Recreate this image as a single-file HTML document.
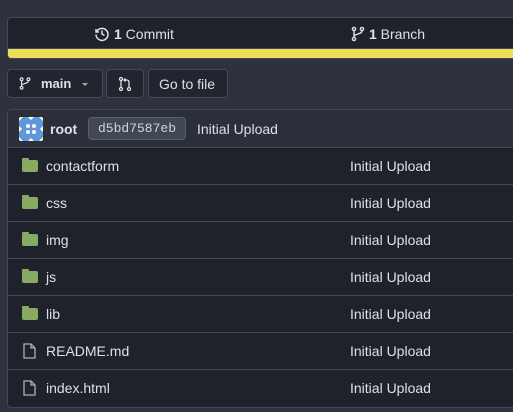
<!DOCTYPE html><html><head><style>
body{margin:0;width:513px;height:412px;background:#2e323e;font-family:"Liberation Sans",sans-serif;color:#dbe0ea;font-size:14px;overflow:hidden;position:relative}
.a{position:absolute}
.top{left:7px;top:17px;width:520px;height:40px;background:#1f222a;border:1px solid #454a57;border-radius:4px;overflow:hidden}
.top .y{position:absolute;left:0;right:0;bottom:0;height:9px;background:#eedf5a;border-top:1px solid #454a57}
.btn{top:69px;height:29px;background:#22252d;border:1px solid #454a57;border-radius:4px;box-sizing:border-box}
.panel{left:7px;top:109px;width:520px;height:297px;border:1px solid #454a57;border-radius:4px;background:#1f222a;overflow:hidden}
.hd{height:37px;background:#2b2f3a;border-bottom:1px solid #454a57;position:relative}
.row{height:36px;border-bottom:1px solid #454a57;position:relative}
.row span{position:absolute;top:10px}
.n{left:38px}.m{left:342px}
.fold{position:absolute;left:14px;top:12px;width:16px;height:12px;background:#87ab63;border-radius:2px}
.fold:before{content:"";position:absolute;left:0;top:-2px;width:7px;height:3px;background:#87ab63;border-radius:1px}
</style></head><body>
<div class="a top"><div class="y"></div>
<svg class="a" style="left:86px;top:8px" width="16" height="16" viewBox="0 0 16 16" fill="none" stroke="#dbe0ea" stroke-width="1.5"><path d="M2 3v3h3"/><path d="M2.5 6A6 6 0 1 1 2 8.5"/><path d="M8 4.5V8l2.5 1.5"/></svg>
<div class="a" style="left:106px;top:8px"><b>1</b> Commit</div>
<svg class="a" style="left:343px;top:8px" width="14" height="16" viewBox="0 0 14 16" fill="none" stroke="#dbe0ea" stroke-width="1.4"><circle cx="3" cy="3" r="1.6"/><circle cx="3" cy="13" r="1.6"/><circle cx="11" cy="3" r="1.6"/><path d="M3 4.6v6.8M11 4.6c0 4-8 3-8 6"/></svg>
<div class="a" style="left:361px;top:8px"><b>1</b> Branch</div>
</div>
<div class="a btn" style="left:7px;width:96px"></div>
<svg class="a" style="left:19px;top:76px" width="12" height="15" viewBox="0 0 14 16" fill="none" stroke="#dbe0ea" stroke-width="1.4"><circle cx="3" cy="3" r="1.6"/><circle cx="3" cy="13" r="1.6"/><circle cx="11" cy="3" r="1.6"/><path d="M3 4.6v6.8M11 4.6c0 4-8 3-8 6"/></svg>
<div class="a" style="left:41px;top:76px;font-weight:bold;font-size:13px">main</div>
<div class="a" style="left:82px;top:83px;border:3.5px solid transparent;border-top-color:#aab;"></div>
<div class="a btn" style="left:106px;width:38px"></div>
<svg class="a" style="left:117px;top:76px" width="16" height="16" viewBox="0 0 16 16" fill="none" stroke="#dbe0ea" stroke-width="1.3"><circle cx="4" cy="3" r="1.5"/><circle cx="4" cy="13" r="1.5"/><circle cx="12" cy="13" r="1.5"/><path d="M4 4.5v7M12 11.5V6c0-1-1-2-2-2H7M8.5 2.5 7 4l1.5 1.5"/></svg>
<div class="a btn" style="left:148px;width:80px"></div>
<div class="a" style="left:159px;top:76px">Go to file</div>
<div class="a panel">
<div class="hd">
<svg class="a" style="left:11px;top:7px" width="24" height="24" viewBox="0 0 24 24"><rect width="24" height="24" rx="2" fill="#fff"/><path d="M0 4 4 0h5l3 3 3-3h5l4 4v5l-3 3 3 3v5l-4 4h-5l-3-3-3 3H4l-4-4v-5l3-3-3-3z" fill="#5f98d9"/><g fill="#fff"><circle cx="9" cy="9" r="2"/><circle cx="15" cy="9" r="2"/><circle cx="9" cy="15" r="2"/><circle cx="15" cy="15" r="2"/></g></svg>
<div class="a" style="left:42px;top:11px;font-weight:bold">root</div>
<div class="a" style="left:80px;top:7px;width:98px;height:23px;background:#424754;border:1px solid #5a5f6c;border-radius:4px;box-sizing:border-box;font-family:'Liberation Mono',monospace;font-size:13px;color:#cfd4dd;text-align:center;line-height:21px">d5bd7587eb</div>
<div class="a" style="left:189px;top:11px">Initial Upload</div>
</div>
<div class="row"><i class="fold"></i><span class="n">contactform</span><span class="m">Initial Upload</span></div>
<div class="row"><i class="fold"></i><span class="n">css</span><span class="m">Initial Upload</span></div>
<div class="row"><i class="fold"></i><span class="n">img</span><span class="m">Initial Upload</span></div>
<div class="row"><i class="fold"></i><span class="n">js</span><span class="m">Initial Upload</span></div>
<div class="row"><i class="fold"></i><span class="n">lib</span><span class="m">Initial Upload</span></div>
<div class="row"><svg class="a" style="left:15px;top:10px" width="13" height="16" viewBox="0 0 13 16" fill="none" stroke="#aab0bc" stroke-width="1.3"><path d="M1 1h7l4 4v10H1z"/><path d="M8 1v4h4"/></svg><span class="n">README.md</span><span class="m">Initial Upload</span></div>
<div class="row" style="border:0"><svg class="a" style="left:15px;top:10px" width="13" height="16" viewBox="0 0 13 16" fill="none" stroke="#aab0bc" stroke-width="1.3"><path d="M1 1h7l4 4v10H1z"/><path d="M8 1v4h4"/></svg><span class="n">index.html</span><span class="m">Initial Upload</span></div>
</div>
</body></html>
